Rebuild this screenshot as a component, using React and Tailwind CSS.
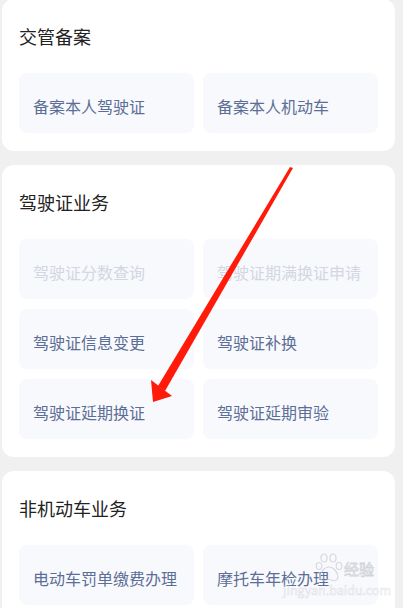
const sections = [
  {
    title: "交管备案",
    items: [{ label: "备案本人驾驶证" }, { label: "备案本人机动车" }],
  },
  {
    title: "驾驶证业务",
    items: [
      { label: "驾驶证分数查询", disabled: true },
      { label: "驾驶证期满换证申请", disabled: true },
      { label: "驾驶证信息变更" },
      { label: "驾驶证补换" },
      { label: "驾驶证延期换证" },
      { label: "驾驶证延期审验" },
    ],
  },
  {
    title: "非机动车业务",
    items: [{ label: "电动车罚单缴费办理" }, { label: "摩托车年检办理" }],
  },
];

function Section({ title, items, first }) {
  return (
    <div
      className={`mr-[8px] ml-[2px] rounded-xl bg-white px-[17px] pt-[25px] pb-[18px] ${
        first ? "-mt-[1px]" : "mt-[14px]"
      }`}
    >
      <h2 className="text-[18px] leading-[24px] text-[#222222]">{title}</h2>
      <div className="mt-[25px] grid grid-cols-2 gap-x-[9px] gap-y-[10px]">
        {items.map((item) => (
          <div
            key={item.label}
            className="flex h-[60px] items-center rounded-lg bg-[#f8f9fc] pt-[6px] pl-[14px]"
          >
            <span
              className={`whitespace-nowrap text-[16px] ${
                item.disabled ? "text-[#d2d7e2]" : "text-[#5c6e97]"
              }`}
            >
              {item.label}
            </span>
          </div>
        ))}
      </div>
    </div>
  );
}

export default function App() {
  return (
    <div
      className="relative h-[608px] overflow-hidden bg-[#f0f0f0]"
      style={{ fontFamily: '"Noto Sans CJK SC", "Noto Sans", sans-serif' }}
    >
      {sections.map((s, i) => (
        <Section key={s.title} title={s.title} items={s.items} first={i === 0} />
      ))}

      {/* red annotation arrow */}
      <svg
        className="pointer-events-none absolute top-0 left-0"
        width="403"
        height="608"
        viewBox="0 0 403 608"
      >
        <polygon points="290,167 293,168 165,391 158,386" fill="#ff1a0a" />
        <polygon points="153,402 151,380 172,396" fill="#ff1a0a" />
      </svg>

      {/* watermark */}
      <svg
        className="pointer-events-none absolute top-[552px] left-[315px] opacity-70"
        width="28"
        height="31"
        viewBox="0 0 28 31"
        fill="none"
        stroke="#c9ccd2"
        strokeWidth="1.2"
      >
        <ellipse cx="9" cy="6" rx="3" ry="4" />
        <ellipse cx="18" cy="6" rx="3" ry="4" />
        <ellipse cx="4" cy="14" rx="2.8" ry="3.5" />
        <ellipse cx="24" cy="14" rx="2.8" ry="3.5" />
        <path d="M14 15c-5 0-9 6-9 10 0 3 3 4 5 3.5 2-.5 2.5-1 4-1s2 .5 4 1c2 .5 5-.5 5-3.5 0-4-4-10-9-10z" />
      </svg>
      <span className="pointer-events-none absolute top-[559px] left-[344px] text-[15px] leading-[20px] text-transparent opacity-70 [-webkit-text-stroke:0.8px_#c4c7cd]">
        经验
      </span>
      <span className="pointer-events-none absolute top-[584px] left-[283px] text-[12.5px] leading-[12px] text-transparent opacity-60 [-webkit-text-stroke:0.5px_#cdd0d5]">
        jingyan.baidu.com
      </span>
    </div>
  );
}
